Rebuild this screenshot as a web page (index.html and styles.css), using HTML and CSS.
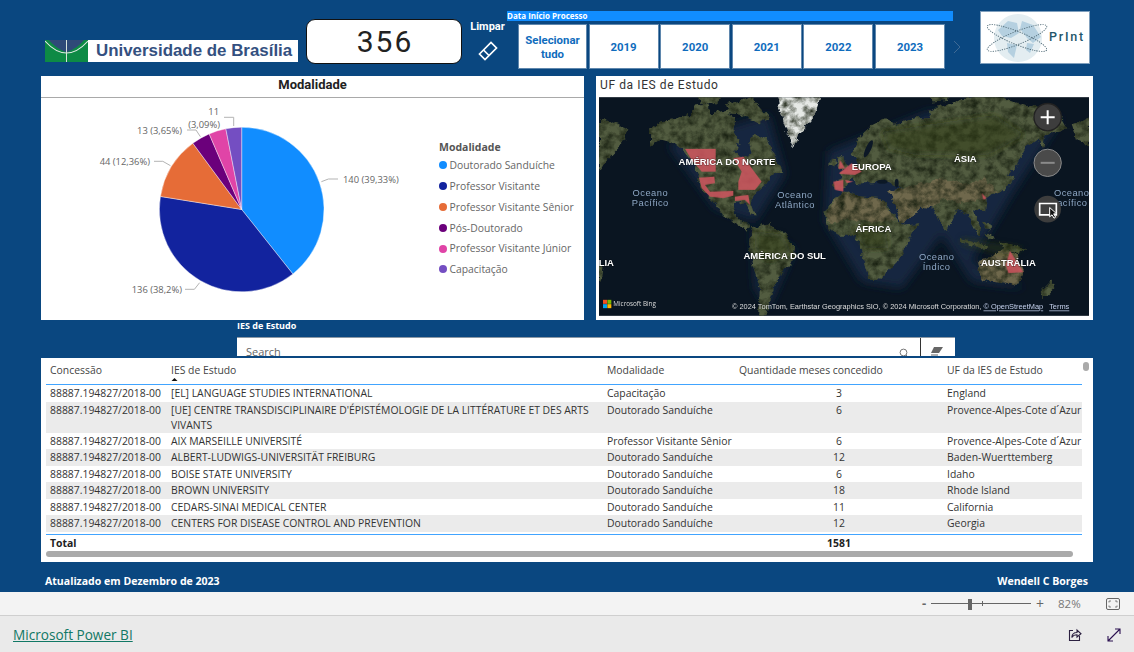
FILE: index.html
```html
<!DOCTYPE html>
<html lang="pt-BR">
<head>
<meta charset="utf-8">
<title>Microsoft Power BI</title>
<link rel="stylesheet" href="styles.css">
</head>
<body>
<div class="canvas">
  <header class="top">
    <div class="logo">
      <svg class="flag" viewBox="0 0 43 22" aria-hidden="true">
        <rect width="43" height="22" fill="#0d8a45"/>
        <path d="M4 0H39Q34 7 21.5 12.5 9 7 4 0Z" fill="#2f4a78"/>
        <path d="M0 1Q21.5 25 43 1" fill="none" stroke="#e6ece8" stroke-width="1.1"/>
        <path d="M21.5 0V22" stroke="#d8e4dc" stroke-width="1"/>
      </svg>
      <span class="logo-text">Universidade de Brasília</span>
    </div>
    <div class="kpi">356</div>
    <div class="clear">
      <span>Limpar</span>
      <svg class="clear-icon" viewBox="0 0 20 20" aria-hidden="true">
        <path d="M1.5 13 13 1.5 18.5 7 7 18.5Z" fill="none" stroke="#fff" stroke-width="1.7"/>
        <path d="M5.5 9 11 14.5" stroke="#fff" stroke-width="1.7"/>
      </svg>
    </div>
    <div class="slicer">
      <div class="slicer-title">Data Início Processo</div>
      <div class="slicer-buttons">
        <div class="year year-all">Selecionar tudo</div>
        <div class="year">2019</div>
        <div class="year">2020</div>
        <div class="year">2021</div>
        <div class="year">2022</div>
        <div class="year">2023</div>
        <svg class="chev" viewBox="0 0 8 14" aria-hidden="true"><path d="M1 1l6 6-6 6" fill="none" stroke="#3f6a95" stroke-width="1"/></svg>
      </div>
    </div>
    <div class="print">
      <svg class="print-globe" viewBox="0 0 62 50" aria-hidden="true">
        <circle cx="33" cy="25" r="24" fill="#e3edf1"/>
        <path d="M13 17l10-9 9 2 2 10-8 5-9-2Z M37 8l11 4 8 12-8 6-6-5-7-9Z M22 30l10 2-3 13-6-6Z M42 30l7 1-4 9-4-3Z" fill="#b5d0e0"/>
        <ellipse class="orbit" cx="32" cy="25" rx="32" ry="6.5" transform="rotate(22 32 25)"/>
        <ellipse class="orbit" cx="32" cy="25" rx="32" ry="6.5" transform="rotate(-22 32 25)"/>
      </svg>
      <span class="print-text">PrInt</span>
    </div>
  </header>

  <section class="visuals">
    <div class="visual visual-pie">
      <h2 class="pie-title">Modalidade</h2>
      <div class="pie-body">
        <svg class="pie" viewBox="41 98 389 222" aria-label="Gráfico de pizza">
          <g transform="translate(241.7 209.5)" stroke="#fff" stroke-width=".4">
            <path fill="#118dff" d="M0 0V-82.3A82.3 82.3 0 0 1 51.16 64.47Z"/>
            <path fill="#12239e" d="M0 0L51.16 64.47A82.3 82.3 0 0 1 -81.26 -13.02Z"/>
            <path fill="#e66c37" d="M0 0L-81.26 -13.02A82.3 82.3 0 0 1 -48.84 -66.24Z"/>
            <path fill="#6b007b" d="M0 0L-48.84 -66.24A82.3 82.3 0 0 1 -32.51 -75.61Z"/>
            <path fill="#e044a7" d="M0 0L-32.51 -75.61A82.3 82.3 0 0 1 -15.87 -80.75Z"/>
            <path fill="#744ec2" d="M0 0L-15.87 -80.75A82.3 82.3 0 0 1 0 -82.3Z"/>
          </g>
          <g class="leader">
            <path d="M321.4 181.7 328.4 179H338"/>
            <path d="M199.6 282.7 194.4 289.3H185"/>
            <path d="M170.5 165.7 162.8 161.3H154"/>
            <path d="M200.4 136.7 196 130H187"/>
            <path d="M233.7 126V117.3H224"/>
          </g>
          <text class="pie-label" x="343" y="183">140 (39,33%)</text>
          <text class="pie-label" x="182" y="293" text-anchor="end">136 (38,2%)</text>
          <text class="pie-label" x="150" y="165" text-anchor="end">44 (12,36%)</text>
          <text class="pie-label" x="182" y="134" text-anchor="end">13 (3,65%)</text>
          <text class="pie-label" x="219" y="115" text-anchor="end">11</text>
          <text class="pie-label" x="220" y="128" text-anchor="end">(3,09%)</text>
        </svg>
        <div class="legend">
          <div class="legend-title">Modalidade</div>
          <div class="legend-item"><i class="dot dot-1"></i>Doutorado Sanduíche</div>
          <div class="legend-item"><i class="dot dot-2"></i>Professor Visitante</div>
          <div class="legend-item"><i class="dot dot-3"></i>Professor Visitante Sênior</div>
          <div class="legend-item"><i class="dot dot-4"></i>Pós-Doutorado</div>
          <div class="legend-item"><i class="dot dot-5"></i>Professor Visitante Júnior</div>
          <div class="legend-item"><i class="dot dot-6"></i>Capacitação</div>
        </div>
      </div>
    </div>

    <div class="visual visual-map">
      <h2 class="map-title">UF da IES de Estudo</h2>
      <svg class="map" viewBox="12 67 1470 656" aria-label="Mapa">
        <defs>
          <filter id="rough" x="-5%" y="-5%" width="110%" height="110%" color-interpolation-filters="sRGB">
            <feTurbulence type="fractalNoise" baseFrequency="0.045" numOctaves="4" seed="4" result="edge"/>
            <feDisplacementMap in="SourceGraphic" in2="edge" scale="22" xChannelSelector="R" yChannelSelector="G" result="shape"/>
            <feTurbulence type="fractalNoise" baseFrequency="0.04" numOctaves="4" seed="11" result="blot"/>
            <feColorMatrix in="blot" values="0 0 0 0 .10  0 0 0 0 .13  0 0 0 0 .07  1.8 0 0 0 -.62" result="dark"/>
            <feComposite in="dark" in2="shape" operator="in" result="darkland"/>
            <feMerge><feMergeNode in="shape"/><feMergeNode in="darkland"/></feMerge>
          </filter>
          <filter id="soft" x="-20%" y="-20%" width="140%" height="140%"><feGaussianBlur stdDeviation="9"/></filter>
          <filter id="shelf" x="-5%" y="-5%" width="110%" height="110%"><feGaussianBlur stdDeviation="14"/></filter>
          <filter id="edge" x="-5%" y="-5%" width="110%" height="110%"><feGaussianBlur stdDeviation="1.2"/></filter>
          <clipPath id="mapclip"><rect x="12" y="67" width="1470" height="656"/></clipPath>
        </defs>
        <rect x="12" y="67" width="1470" height="656" class="ocean"/>
        <g clip-path="url(#mapclip)">
          <g class="shelf" filter="url(#shelf)">
            <path d="M220 210 520 120 570 300 480 440 360 400Z"/>
            <path d="M700 230 1000 110 1400 130 1250 360 1130 560 1290 640 1130 620 1040 480 920 640 800 620 690 440Z"/>
            <path d="M470 460 600 520 520 700 480 640Z"/>
          </g>
          <g filter="url(#rough)" class="land">
            <path id="na" d="M165 165 200 140 245 130 290 120 300 92 340 85 345 120 395 105 420 135 415 170 430 197 420 235 445 247 470 235 460 205 480 180 520 195 550 270 572 290 530 300 510 330 480 355 470 385 482 422 466 420 450 380 415 385 420 420 440 440 472 455 455 464 420 445 385 425 350 375 320 340 308 305 300 270 265 225 240 205 200 195 165 215Z"/>
            <path d="M390 90 470 68 525 130 490 145 440 120 400 115Z M300 60 380 50 370 85 320 85Z"/>
            <path d="M470 462 520 445 570 480 602 520 590 562 545 610 525 680 505 740 488 740 495 640 470 565 462 500Z"/>
            <path d="M690 420 720 365 760 350 800 365 860 370 890 410 920 450 970 445 930 520 905 565 860 615 820 610 800 530 780 480 730 480 700 460Z"/>
            <path class="land-dry" d="M695 425 722 368 760 352 800 367 860 372 885 410 905 440 830 440 750 435 705 450Z"/>
            <path d="M790 262 770 235 790 190 830 150 870 130 905 150 960 130 1010 130 1000 105 1060 90 1100 70 1200 55 1290 90 1400 125 1420 160 1385 170 1350 185 1345 215 1330 190 1290 220 1265 270 1240 300 1215 345 1175 375 1170 410 1140 400 1150 440 1160 482 1140 470 1115 420 1085 405 1060 470 1035 450 1015 400 975 395 960 420 920 445 890 375 880 345 930 345 880 322 830 325 790 325 770 310 750 340 715 345 715 320 745 310 735 295 770 275Z"/>
            <path class="land-dry" d="M880 345 930 345 960 330 1040 310 1120 330 1170 310 1205 350 1170 370 1100 385 1040 370 1015 400 975 395 960 420 920 445 890 375Z"/>
            <path class="land-dry" d="M1145 560 1180 550 1230 520 1265 540 1285 590 1270 630 1220 625 1160 615Z"/>
            <path d="M725 250 745 240 755 280 730 285Z M708 255 722 258 718 272 706 270Z M12 130 70 150 100 170 70 220 30 260 12 290Z M1430 150 1482 130 1482 210 1440 190Z M1235 300 1255 310 1230 350 1215 340Z M1100 490 1180 515 1170 525 1095 500Z M1215 500 1290 520 1270 535 1225 520Z M1175 470 1200 490 1180 500Z M12 570 25 580 20 620 12 620Z M1340 650 1370 620 1375 640 1345 670Z M1165 440 1190 450 1185 465 1170 460Z M1000 60 1060 50 1060 75 1010 80Z"/>
            <path class="land-ice" d="M540 30 690 30 655 130 610 180 595 220 575 170 555 110Z"/>
          </g>
          <g class="forest" filter="url(#soft)">
            <path d="M480 470 560 480 590 530 520 560 480 520Z"/>
            <path d="M770 460 870 450 880 520 810 520Z"/>
            <path d="M1100 490 1290 520 1240 540 1100 510Z"/>
            <path d="M860 170 1200 120 1290 180 1180 240 960 240 880 220Z"/>
          </g>
          <g class="water">
            <ellipse cx="862" cy="320" rx="16" ry="6"/>
            <ellipse cx="905" cy="325" rx="6" ry="13"/>
            <ellipse cx="820" cy="222" rx="8" ry="28" transform="rotate(25 820 222)"/>
          </g>
          <g class="uf" filter="url(#edge)">
            <path d="M270 222H362V290H320L290 255Z"/>
            <path d="M312 308 358 305 360 325 330 330 345 350 415 348 415 362 385 370 345 365 320 340Z"/>
            <path d="M415 250 445 245 470 280 500 320 480 345 430 345 430 320 440 290Z"/>
            <path d="M420 365 440 362 460 360 465 390 450 375 420 378Z"/>
            <path d="M735 255 750 280 730 282Z"/>
            <path d="M732 295 770 265 800 290 780 300 735 297Z"/>
            <path d="M715 320 745 315 745 350 720 345Z"/>
            <path d="M750 315 775 320 755 325Z"/>
            <path d="M1160 355 1175 370 1165 375Z"/>
            <path d="M1245 528 1262 555 1285 592 1240 595 1232 570Z"/>
          </g>
          <text class="m-cont" x="396" y="271">AMÉRICA DO NORTE</text>
          <text class="m-cont" x="830" y="286">EUROPA</text>
          <text class="m-cont" x="1111" y="261">ÁSIA</text>
          <text class="m-cont" x="835" y="473">ÁFRICA</text>
          <text class="m-cont" x="569" y="552">AMÉRICA DO SUL</text>
          <text class="m-cont" x="1240" y="573">AUSTRÁLIA</text>
          <text class="m-cont" x="34" y="573">LIA</text>
          <text class="m-ocean" x="166" y="364">Oceano</text>
          <text class="m-ocean" x="166" y="394">Pacífico</text>
          <text class="m-ocean" x="600" y="369">Oceano</text>
          <text class="m-ocean" x="600" y="399">Atlântico</text>
          <text class="m-ocean" x="1025" y="556">Oceano</text>
          <text class="m-ocean" x="1025" y="586">Índico</text>
          <text class="m-ocean" x="1430" y="364">Oceano</text>
          <text class="m-ocean" x="1432" y="394">acífico</text>
          <g>
            <rect x="24" y="675" width="12" height="12" fill="#f25022"/>
            <rect x="37" y="675" width="12" height="12" fill="#7fba00"/>
            <rect x="24" y="688" width="12" height="12" fill="#00a4ef"/>
            <rect x="37" y="688" width="12" height="12" fill="#ffb900"/>
          </g>
          <text class="m-bing" x="55" y="694">Microsoft Bing</text>
          <text class="m-copy" x="411" y="704">© 2024 TomTom, Earthstar Geographics SIO, © 2024 Microsoft Corporation, <tspan class="m-link">© OpenStreetMap</tspan><tspan class="m-link" dx="18">Terms</tspan></text>
          <circle cx="1358" cy="127" r="41" fill="#3d3d3d" stroke="#222" stroke-width="4"/>
          <path d="M1358 106V148M1337 127H1379" stroke="#fff" stroke-width="6"/>
          <circle cx="1358" cy="264" r="41" fill="#4a4a4a" stroke="#8a8a8a" stroke-width="3"/>
          <path d="M1337 264H1379" stroke="#8a8a8a" stroke-width="6"/>
          <circle cx="1358" cy="403" r="40" fill="#3d3d3d"/>
          <path d="M1334 386H1384V420H1334Z" fill="none" stroke="#fff" stroke-width="5"/>
          <path d="M1364 398V426L1371 420 1377 430 1382 427 1376 417H1385Z" fill="#111" stroke="#fff" stroke-width="3"/>
        </g>
      </svg>
    </div>
  </section>

  <section class="search-slicer">
    <div class="search-title">IES de Estudo</div>
    <div class="search-box">
      <span class="search-text">Search</span>
      <svg class="search-icon" viewBox="0 0 10 10" aria-hidden="true"><circle cx="4.5" cy="4.5" r="3.4" fill="none" stroke="#777" stroke-width="1"/><path d="M7 7l2.5 2.5" stroke="#777"/></svg>
      <span class="search-sep"></span>
      <svg class="search-eraser" viewBox="0 0 14 10" aria-hidden="true"><path d="M4 1H13L9 7H1Z" fill="#666"/><path d="M1 9H8" stroke="#666"/></svg>
    </div>
  </section>

  <section class="visual-table">
    <div class="table-clip">
      <table class="grid">
        <colgroup><col class="c1"><col class="c2"><col class="c3"><col class="c4"><col class="c5"></colgroup>
        <thead>
          <tr><th>Concessão</th><th class="sorted">IES de Estudo<svg class="sort" viewBox="0 0 8 4" aria-hidden="true"><path d="M0 4 4 0 8 4Z" fill="#111"/></svg></th><th>Modalidade</th><th>Quantidade meses concedido</th><th>UF da IES de Estudo</th></tr>
        </thead>
        <tbody>
          <tr><td>88887.194827/2018-00</td><td>[EL] LANGUAGE STUDIES INTERNATIONAL</td><td>Capacitação</td><td class="num">3</td><td>England</td></tr>
          <tr class="alt"><td>88887.194827/2018-00</td><td class="wrap">[UE] CENTRE TRANSDISCIPLINAIRE D'ÉPISTÉMOLOGIE DE LA LITTÉRATURE ET DES ARTS VIVANTS</td><td>Doutorado Sanduíche</td><td class="num">6</td><td>Provence-Alpes-Cote d´Azur</td></tr>
          <tr><td>88887.194827/2018-00</td><td>AIX MARSEILLE UNIVERSITÉ</td><td>Professor Visitante Sênior</td><td class="num">6</td><td>Provence-Alpes-Cote d´Azur</td></tr>
          <tr class="alt"><td>88887.194827/2018-00</td><td>ALBERT-LUDWIGS-UNIVERSITÄT FREIBURG</td><td>Doutorado Sanduíche</td><td class="num">12</td><td>Baden-Wuerttemberg</td></tr>
          <tr><td>88887.194827/2018-00</td><td>BOISE STATE UNIVERSITY</td><td>Doutorado Sanduíche</td><td class="num">6</td><td>Idaho</td></tr>
          <tr class="alt"><td>88887.194827/2018-00</td><td>BROWN UNIVERSITY</td><td>Doutorado Sanduíche</td><td class="num">18</td><td>Rhode Island</td></tr>
          <tr><td>88887.194827/2018-00</td><td>CEDARS-SINAI MEDICAL CENTER</td><td>Doutorado Sanduíche</td><td class="num">11</td><td>California</td></tr>
          <tr class="alt"><td>88887.194827/2018-00</td><td>CENTERS FOR DISEASE CONTROL AND PREVENTION</td><td>Doutorado Sanduíche</td><td class="num">12</td><td>Georgia</td></tr>
        </tbody>
      </table>
    </div>
    <table class="grid totals">
      <colgroup><col class="c1"><col class="c2"><col class="c3"><col class="c4"><col class="c5"></colgroup>
      <tr><td>Total</td><td></td><td></td><td class="num">1581</td><td></td></tr>
    </table>
    <div class="hscroll"></div>
    <div class="vscroll"></div>
  </section>

  <footer class="canvas-foot">
    <span>Atualizado em Dezembro de 2023</span>
    <span>Wendell C Borges</span>
  </footer>
</div>

<div class="zoombar">
  <span class="z-minus">-</span>
  <div class="z-track"><span class="z-thumb"></span><span class="z-tick"></span></div>
  <span class="z-plus">+</span>
  <span class="z-pct">82%</span>
  <svg class="z-fit" viewBox="0 0 14 12" aria-hidden="true">
    <rect x=".5" y=".5" width="13" height="11" rx="1.5" fill="none" stroke="#666"/>
    <path d="M3 4.5V3H5M9 3H11V4.5M11 7.5V9H9M5 9H3V7.5" fill="none" stroke="#666" stroke-width=".8"/>
  </svg>
</div>

<div class="pbibar">
  <a class="pbi-link" href="#">Microsoft Power BI</a>
  <div class="pbi-actions">
    <svg class="pbi-icon" viewBox="0 0 14 14" aria-hidden="true">
      <path d="M5 2.5H1.5V12.5H11.5V8" fill="none" stroke="#2b2040" stroke-width="1.1"/>
      <path d="M3.8 9.5C4 6.5 6 4.5 9 4.5V2L13 5.8 9 9V6.8C7 6.8 5 7.6 3.8 9.5Z" fill="none" stroke="#2b2040" stroke-width="1.1"/>
    </svg>
    <svg class="pbi-icon" viewBox="0 0 14 14" aria-hidden="true">
      <path d="M1 13 13 1M8 1H13V6M1 8V13H6" fill="none" stroke="#2b1050" stroke-width="1.1"/>
    </svg>
  </div>
</div>
</body>
</html>
```

FILE: styles.css
```css
* { box-sizing: border-box; }
html, body { margin: 0; padding: 0; }
body { width: 1134px; height: 652px; overflow: hidden; font-family: "Open Sans", "Noto Sans", sans-serif; background: #eaeaea; }

.canvas { height: 592px; background: #0a4780; display: flex; flex-direction: column; }

/* top row */
.top { height: 76px; display: flex; align-items: flex-start; padding-left: 45px; flex: none; }
.logo { margin-top: 40px; width: 253px; height: 22px; background: #fff; display: flex; align-items: center; overflow: hidden; }
.flag { width: 43px; height: 22px; flex: none; }
.logo-text { margin-left: 8px; font: 700 16.9px/22px "Liberation Sans", sans-serif; color: #34507f; white-space: nowrap; }
.kpi { margin: 19px 0 0 8px; width: 156px; height: 45px; background: #fff; border: 1px solid #111; border-radius: 9px; display: flex; align-items: center; justify-content: center; padding-left: 2px; font: 400 30px/1 Roboto, sans-serif; letter-spacing: 2px; color: #222; }
.clear { margin: 20px 0 0 8px; width: 35px; display: flex; flex-direction: column; align-items: center; color: #fff; font: 700 11px/14px Roboto, sans-serif; }
.clear-icon { width: 20px; height: 20px; margin-top: 7px; }
.slicer { margin: 11px 0 0 2px; width: 446px; }
.slicer-title { height: 10px; background: #118dff; color: #fff; font: 700 8px/10px "Open Sans", sans-serif; white-space: nowrap; }
.slicer-buttons { margin: 3px 0 0 11px; display: flex; gap: 1.6px; align-items: center; height: 45px; }
.year { flex: none; width: 70px; height: 45px; background: #fff; border: 1px solid #5f87ad; display: flex; align-items: center; justify-content: center; text-align: center; color: #0f6cbd; font: 700 11.4px/14px Roboto, sans-serif; }
.year-all { width: 69px; padding: 0 6px; }
.chev { flex: none; width: 8px; height: 14px; margin-left: 6px; }
.print { margin: 11px 0 0 27px; width: 110px; height: 53px; background: #fff; border: 1px solid #7f9fbd; display: flex; align-items: center; }
.print-globe { width: 62px; height: 50px; margin-left: 4px; flex: none; overflow: visible; }
.orbit { fill: none; stroke: #56707c; stroke-width: .9; stroke-dasharray: 1.3 1.1; }
.print-text { font: 500 12.5px/1 Roboto, sans-serif; letter-spacing: 1.8px; color: #23566b; margin-left: 2px; }

/* visuals */
.visuals { height: 244px; flex: none; display: flex; gap: 12px; padding-left: 41px; }
.visual { background: #fff; height: 244px; }
.visual-pie { width: 543px; }
.pie-title { margin: 0; height: 22px; border-bottom: 1px solid #a9a9a9; text-align: center; font: 700 13px/18px Roboto, sans-serif; color: #222; }
.pie-body { display: flex; }
.pie { width: 389px; height: 222px; flex: none; }
.leader path { fill: none; stroke: #b3b3b3; stroke-width: 1; }
.pie-label { font: 400 9.4px "Open Sans", sans-serif; fill: #666; }
.legend { margin: 42px 0 0 9px; }
.legend-title { font: 700 10.5px/15px "Open Sans", sans-serif; color: #555; white-space: nowrap; }
.legend-item { height: 20.8px; display: flex; align-items: center; gap: 2.5px; font: 400 10.35px/1 "Open Sans", sans-serif; color: #666; white-space: nowrap; }
.dot { width: 8px; height: 8px; border-radius: 50%; flex: none; }
.dot-1 { background: #118dff; } .dot-2 { background: #12239e; } .dot-3 { background: #e66c37; }
.dot-4 { background: #6b007b; } .dot-5 { background: #e044a7; } .dot-6 { background: #744ec2; }

.visual-map { width: 497px; padding-left: 3px; }
.map-title { margin: 0 0 0 1px; height: 21px; font: 400 12px/18px Roboto, sans-serif; letter-spacing: .6px; color: #333; }
.map { display: block; width: 490px; height: 219px; }
.ocean { fill: #0a1521; }
.shelf path { fill: #14283f; }
.land path { fill: #525c40; }
.land .land-dry { fill: #6f684c; }
.land .land-ice { fill: #e6e9e6; }
.forest path { fill: #2f3d1c; opacity: .5; }
.water ellipse { fill: #0c1826; }
.uf path { fill: #c8545c; opacity: .9; }
.m-cont { font: 700 28.5px "Liberation Sans", sans-serif; fill: #fff; text-anchor: middle; paint-order: stroke; stroke: rgba(0,0,0,.35); stroke-width: 3px; }
.m-ocean { font: 400 28px "Liberation Sans", sans-serif; fill: #8ea7c4; text-anchor: middle; letter-spacing: 1.4px; }
.m-bing { font: 400 19px "Open Sans", sans-serif; fill: #ddd; }
.m-copy { font: 400 22.2px "Liberation Sans", sans-serif; fill: #ddd; }
.m-link { text-decoration: underline; fill: #c6d2ee; }

/* search slicer */
.search-slicer { height: 38px; flex: none; margin-left: 237px; width: 718px; overflow: hidden; }
.search-title { height: 17px; color: #fff; font: 700 9px/12px "Open Sans", sans-serif; }
.search-box { height: 19px; background: #fff; border-top: 1px solid #8b98a5; display: flex; overflow: hidden; padding-left: 9px; }
.search-text { margin-top: 7px; font: 400 11px/14px "Open Sans", sans-serif; color: #666; flex: 1; }
.search-icon { width: 10px; height: 10px; margin: 10px 11px 0 0; }
.search-sep { width: 1px; background: #333; }
.search-eraser { width: 14px; height: 10px; margin: 8px 11px 0 9px; }

/* table */
.visual-table { position: relative; height: 204px; flex: none; margin-left: 41px; width: 1052px; background: #fff; padding: 0 11px 0 5px; }
.table-clip { height: 177px; overflow: hidden; border-bottom: 1px solid #41a4ff; }
.grid { table-layout: fixed; border-collapse: separate; border-spacing: 0; width: 1036px; font: 400 10.4px/14px "Open Sans", sans-serif; color: #333; }
.c1 { width: 121px; } .c2 { width: 436px; } .c3 { width: 132px; } .c4 { width: 208px; } .c5 { width: 139px; }
.grid th { height: 27px; padding: 5px 4px 0; font-weight: 400; text-align: left; vertical-align: top; color: #444; border-bottom: 1px solid #41a4ff; white-space: nowrap; position: relative; }
.sort { position: absolute; left: 4px; top: 20px; width: 7px; height: 3px; }
.grid td { padding: 1px 4px; vertical-align: top; white-space: nowrap; overflow: hidden; height: 16.5px; }
.grid td.wrap { white-space: normal; line-height: 15px; padding-bottom: 0; }
.grid td.num { text-align: center; }
.alt td { background: #ebebeb; }
.totals { font-weight: 700; color: #222; }
.totals td { height: 16px; padding-top: 1px; }
.hscroll { height: 6px; width: 1027px; border-radius: 3px; background: #aaa; }
.vscroll { position: absolute; left: 1042px; top: 4px; width: 6px; height: 9px; border-radius: 3px; background: #aaa; }

.canvas-foot { flex: 1; display: flex; justify-content: space-between; align-items: flex-start; padding: 12px 46px 0 45px; color: #fff; font: 700 10.55px/14px "Open Sans", sans-serif; }

/* report chrome */
.zoombar { height: 24px; background: #f3f3f3; border-bottom: 1px solid #cfcfcf; display: flex; align-items: center; padding-left: 922px; color: #666; }
.z-minus { width: 9px; font: 700 13px/1 "Open Sans", sans-serif; }
.z-track { position: relative; width: 100px; height: 1px; background: #666; }
.z-thumb { position: absolute; left: 37px; top: -4px; width: 4px; height: 11px; background: #666; }
.z-tick { position: absolute; left: 51px; top: -2px; width: 1px; height: 5px; background: #666; }
.z-plus { width: 27px; padding-left: 5px; font: 400 14px/1 "Open Sans", sans-serif; }
.z-pct { width: 48px; font: 400 11.5px/1 "Open Sans", sans-serif; color: #777; }
.z-fit { width: 14px; height: 12px; }
.pbibar { height: 36px; background: #eaeaea; display: flex; align-items: center; justify-content: space-between; padding: 0 13px; }
.pbi-link { margin-top: 3px; font: 400 13.6px/1.2 "Open Sans", sans-serif; color: #117865; text-decoration: underline; }
.pbi-actions { display: flex; gap: 25px; margin-top: 2px; }
.pbi-icon { width: 14px; height: 14px; }
```
